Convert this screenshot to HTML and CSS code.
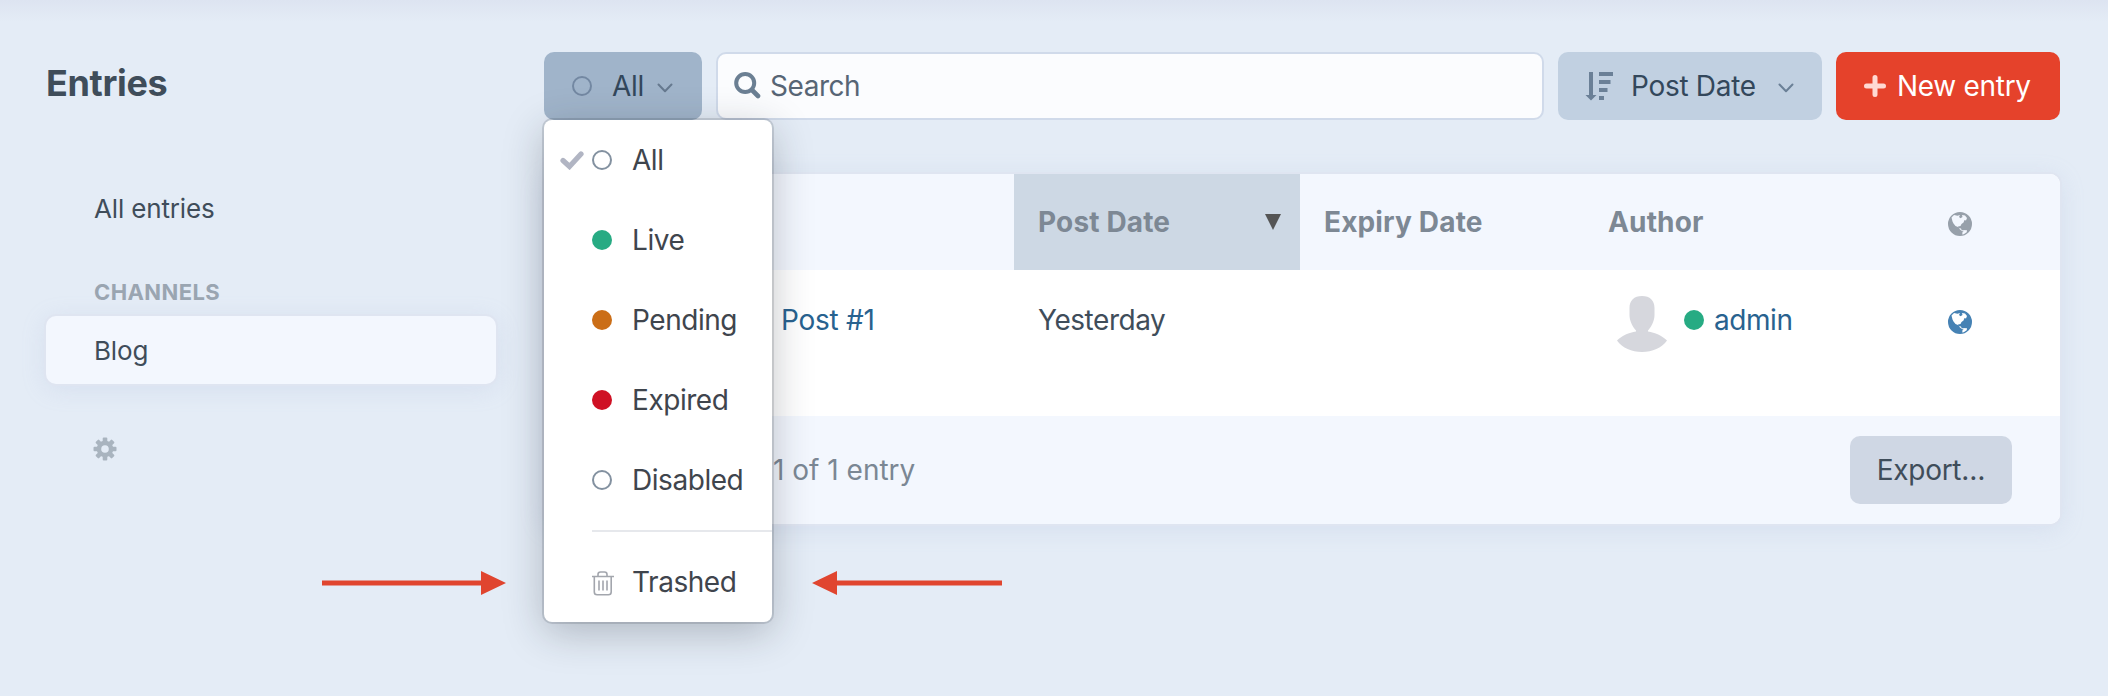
FILE: index.html
```
<!DOCTYPE html>
<html lang="en">
<head>
  <meta charset="UTF-8" />
  <title>Entries</title>
  <link rel="stylesheet" href="styles.css">
</head>
<body>

  <svg class="symbols" width="0" height="0">
    <symbol id="globe" viewBox="0 0 24 24">
      <path fill-rule="evenodd" d="M12 0a12 12 0 1 0 0 24a12 12 0 0 0 0-24zM3.500 5.500L6 3l3.500.8L12 3l-1 2 1.500 1.200L14.500 5 14 3l3 .5 2 2.500-1 2.500-1.500-.5-1 2.500-2 1.500-1 2-2.500.5.500 1.500 2.500.5.800 2 1.800.3-.7 1.200L11.500 17 10 15 7.500 14 5.500 11.500 4.500 9.500zM14 18l5 .3-.3 2-3 2-1.500.2.300-2z"/>
    </symbol>
    <symbol id="chevron" viewBox="0 0 16 10">
      <path d="M1.500 1.500L8 8.200l6.500-6.700" fill="none" stroke="currentColor" stroke-width="2" stroke-linecap="round" stroke-linejoin="round"/>
    </symbol>
  </svg>

  <div class="page">
    <aside class="sidebar">
      <h1>Entries</h1>
      <nav>
        <a class="source">All entries</a>
        <h2>Channels</h2>
        <a class="source sel">Blog</a>
      </nav>
      <svg class="gear" width="24" height="24" viewBox="-12 -12 24 24">
        <circle r="6" fill="none" stroke="currentColor" stroke-width="4.600"/>
        <g fill="currentColor">
          <rect x="-2.300" y="-11.500" width="4.600" height="23" rx="1"/>
          <rect x="-2.300" y="-11.500" width="4.600" height="23" rx="1" transform="rotate(45)"/>
          <rect x="-2.300" y="-11.500" width="4.600" height="23" rx="1" transform="rotate(90)"/>
          <rect x="-2.300" y="-11.500" width="4.600" height="23" rx="1" transform="rotate(135)"/>
        </g>
        <circle r="3.800" fill="#e4ecf6"/>
      </svg>
    </aside>

    <main class="main">
      <div class="toolbar">
        <div class="status-wrap">
          <button type="button" class="btn status-btn">
            <span class="dot"></span>
            <span class="label">All</span>
            <svg class="chevron" width="16" height="10"><use href="#chevron"/></svg>
          </button>

          <ul class="menu">
            <li>
              <svg class="check" width="24" height="20" viewBox="0 0 24 20"><path d="M3 10.500l6.500 6L21 4" fill="none" stroke="currentColor" stroke-width="5.200" stroke-linecap="round"/></svg>
              <span class="dot"></span>All
            </li>
            <li><span class="dot live"></span>Live</li>
            <li><span class="dot pending"></span>Pending</li>
            <li><span class="dot expired"></span>Expired</li>
            <li><span class="dot"></span>Disabled</li>
            <li class="hr"></li>
            <li>
              <svg class="trash" width="22" height="25" viewBox="0 0 22 25" fill="none" stroke="currentColor" stroke-width="1.600">
                <path d="M0 5.500h22M6 5.500V3.500q0-2.500 2.500-2.500h4q2.500 0 2.500 2.500v2M2.300 5.500V21q0 2.800 2.800 2.800h11.300q2.800 0 2.800-2.800V5.500M7 9.500v10M11 9.500v10M15 9.500v10"/>
              </svg>Trashed
            </li>
          </ul>
        </div>

        <div class="search">
          <svg width="27" height="27" viewBox="0 0 27 27" fill="none" stroke="currentColor">
            <circle cx="11.200" cy="11" r="9" stroke-width="4"/>
            <path d="M18 18l6 6" stroke-width="4.600" stroke-linecap="round"/>
          </svg>
          <span>Search</span>
        </div>

        <button type="button" class="btn sort-btn">
          <svg width="28" height="29" viewBox="0 0 28 29" fill="currentColor">
            <path d="M4 0h4v23h3.500L6 28.500.5 23H4zM14 0h14v4H14zM14 8h11.500v4H14zM14 16h8.500v4H14zM14 24h5v4h-5z"/>
          </svg>
          <span class="label">Post Date</span>
          <svg class="chevron" width="16" height="10"><use href="#chevron"/></svg>
        </button>

        <button type="button" class="btn submit">
          <svg width="22" height="22" viewBox="0 0 22 22"><path d="M11 2.500v17M2.500 11h17" stroke="#ffd9d3" stroke-width="5" stroke-linecap="round"/></svg>
          <span>New entry</span>
        </button>
      </div>

      <div class="pane">
        <div class="row head">
          <div></div>
          <div class="ordered"><span>Post Date</span>
            <svg width="16" height="16" viewBox="0 0 16 16"><path d="M0 0h16L8 16z" fill="#555"/></svg>
          </div>
          <div>Expiry Date</div>
          <div>Author</div>
          <div class="site"><svg width="24" height="24"><use href="#globe"/></svg></div>
        </div>
        <div class="row body">
          <div class="title"><a>Post #1</a></div>
          <div>Yesterday</div>
          <div></div>
          <div class="author">
            <svg class="avatar" width="52" height="56" viewBox="0 0 52 56">
              <path d="M26 0c8 0 12.500 4.500 12.500 12v7c0 5-2.500 11-6.500 15.500v1c7 1 14 4 19 9C45.500 52 36.500 56 26 56S6.500 52 1 44.500c5-5 12-8 19-9v-1c-4-4.500-6.500-10.500-6.500-15.500v-7C13.500 4.500 18 0 26 0z"/>
            </svg>
            <span class="dot live"></span>
            <a>admin</a>
          </div>
          <div class="site"><svg width="24" height="24"><use href="#globe"/></svg></div>
        </div>
        <div class="foot">
          <span class="count">1 of 1 entry</span>
          <button type="button" class="btn export">Export…</button>
        </div>
      </div>
    </main>
  </div>

  <!-- arrows pointing at the Trashed option -->
  <svg class="arrow arrow-left" width="184" height="26" viewBox="0 0 184 26"><path d="M0 10.500h159V1l25 12-25 12v-9.500H0z"/></svg>
  <svg class="arrow arrow-right" width="190" height="26" viewBox="0 0 190 26"><path d="M190 10.500H25V1L0 13l25 12v-9.500h165z"/></svg>

</body>
</html>
```

FILE: styles.css
```
* {
  box-sizing: border-box;
}
body {
  margin: 0;
  height: 696px;
  overflow: hidden;
  background: linear-gradient(#dde4f1, #e4ecf6 22px);
  color: #3f4d5a;
  font-family: Inter, "Liberation Sans", sans-serif;
  font-size: 28px;
  line-height: 40px;
  letter-spacing: -0.45px;
}
h1, h2, ul {
  margin: 0;
  padding: 0;
}
.symbols {
  position: absolute;
}
.page {
  display: flex;
  gap: 48px;
  padding: 52px 48px 0 46px;
}

/* sidebar */
.sidebar {
  width: 450px;
}
h1 {
  padding-top: 7px;
  font-size: 36px;
  line-height: 48px;
  letter-spacing: -0.35px;
}
.source {
  display: block;
  height: 68px;
  padding: 0 48px;
  border-radius: 10px;
  font-size: 26px;
  line-height: 70px;
  letter-spacing: -0.15px;
}
nav {
  padding-top: 67px;
}
nav h2 {
  padding: 34px 48px 7px;
  color: #9aa5b1;
  font-size: 22px;
  line-height: 33px;
  letter-spacing: 0.4px;
  text-transform: uppercase;
}
.source.sel {
  background: #f3f7fe;
  box-shadow: 0 0 0 2px #dfe5f1, 0 4px 24px rgba(160, 175, 215, 0.22);
}
.gear {
  display: block;
  margin: 53px 0 0 47px;
  color: #a9b4bf;
}

/* toolbar */
.main {
  flex: 1;
}
.toolbar {
  display: flex;
  gap: 14px;
}
.btn {
  display: flex;
  align-items: center;
  height: 68px;
  border: none;
  border-radius: 10px;
  font: inherit;
  letter-spacing: -0.3px;
  color: #33475b;
  white-space: nowrap;
}
.status-wrap {
  position: relative;
}
.status-btn {
  width: 158px;
  padding: 0 28px;
  background: #a0b4ca;
}
.status-btn .label {
  flex: 1;
  padding-left: 20px;
  text-align: left;
}
.chevron {
  color: #66798f;
}
.status-btn .chevron {
  margin: 4px 1px 0 0;
}
.dot {
  flex: none;
  width: 20px;
  height: 20px;
  border: 2px solid #8391a0;
  border-radius: 50%;
}
.status-btn .dot {
  border-color: #7388a2;
}
.dot.live {
  border: none;
  background: #27ab83;
}
.dot.pending {
  border: none;
  background: #cb6e17;
}
.dot.expired {
  border: none;
  background: #cf1124;
}
.search {
  flex: 1;
  display: flex;
  align-items: center;
  gap: 9px;
  height: 68px;
  padding: 0 16px;
  border: 2px solid #d0daea;
  border-radius: 10px;
  background: #fbfcfe;
  color: #576575;
}
.search svg {
  margin-top: -2px;
  color: #6b7f93;
}
.sort-btn {
  width: 264px;
  padding: 0 28px;
  background: #c1d0e1;
}
.sort-btn svg {
  color: #6b8097;
}
.sort-btn svg:first-child {
  margin-left: -1px;
}
.sort-btn .label {
  flex: 1;
  padding-left: 18px;
  text-align: left;
}
.sort-btn .chevron {
  margin-top: 4px;
}
.submit {
  gap: 11px;
  width: 224px;
  padding: 0 28px;
  background: #e5422b;
  color: #fff;
}

/* status menu */
.menu {
  position: absolute;
  top: 68px;
  left: 0;
  z-index: 2;
  width: 228px;
  height: 502px;
  border-radius: 8px;
  background: #fff;
  box-shadow: 0 0 0 2px rgba(31, 41, 51, 0.15), 0 10px 40px rgba(31, 41, 51, 0.28);
  list-style: none;
}
.menu li {
  display: flex;
  align-items: center;
  gap: 20px;
  height: 80px;
  padding-left: 48px;
  color: #3f454d;
}
.menu .check {
  margin: 0 -12px 0 -32px;
  color: #b1b5c3;
}
.menu .hr {
  height: 2px;
  margin: 10px 0 10px 48px;
  padding: 0;
  background: #e6e8ec;
}
.menu .trash {
  margin: 2px -2px 0 0;
  color: #a3a6ad;
}

/* entries table */
.pane {
  margin-top: 54px;
  border-radius: 10px;
  background: #fff;
  box-shadow: 0 0 0 2px #dfe5f1, 0 4px 24px rgba(160, 175, 215, 0.22);
}
.row {
  display: grid;
  grid-template-columns: 470px 286px 284px 286px 190px;
}
.row > div {
  display: flex;
  align-items: center;
  padding: 0 24px;
}
.head {
  height: 96px;
  border-radius: 10px 10px 0 0;
  background: #f3f7fe;
  color: #7d8894;
  font-weight: 700;
  letter-spacing: 0.15px;
}
.head .ordered {
  justify-content: space-between;
  padding-right: 19px;
  background: #cdd8e4;
}
.head .site svg {
  fill: #97a0aa;
}
.body {
  height: 146px;
  padding-bottom: 46px;
}
.body a {
  color: #28628f;
}
.row .title {
  padding-left: 237px;
  letter-spacing: -0.25px;
}
.row .author {
  padding-left: 32px;
}
.author .avatar {
  margin-top: 8px;
  fill: #d6d7dd;
}
.author .dot {
  margin: 0 10px 0 16px;
}
.row .site {
  padding: 3px 0 0 78px;
}
.body .site svg {
  fill: #4682b4;
}
.foot {
  display: flex;
  align-items: center;
  justify-content: space-between;
  height: 108px;
  padding: 0 48px 0 229px;
  border-radius: 0 0 10px 10px;
  background: #f3f7fe;
}
.count {
  color: #7b8794;
  letter-spacing: 0;
}
.export {
  justify-content: center;
  width: 162px;
  background: #cfd7e4;
  color: #3f4d5a;
}

.arrow {
  position: absolute;
  top: 570px;
  fill: #e0452f;
}
.arrow-left {
  left: 322px;
}
.arrow-right {
  left: 812px;
}
```
